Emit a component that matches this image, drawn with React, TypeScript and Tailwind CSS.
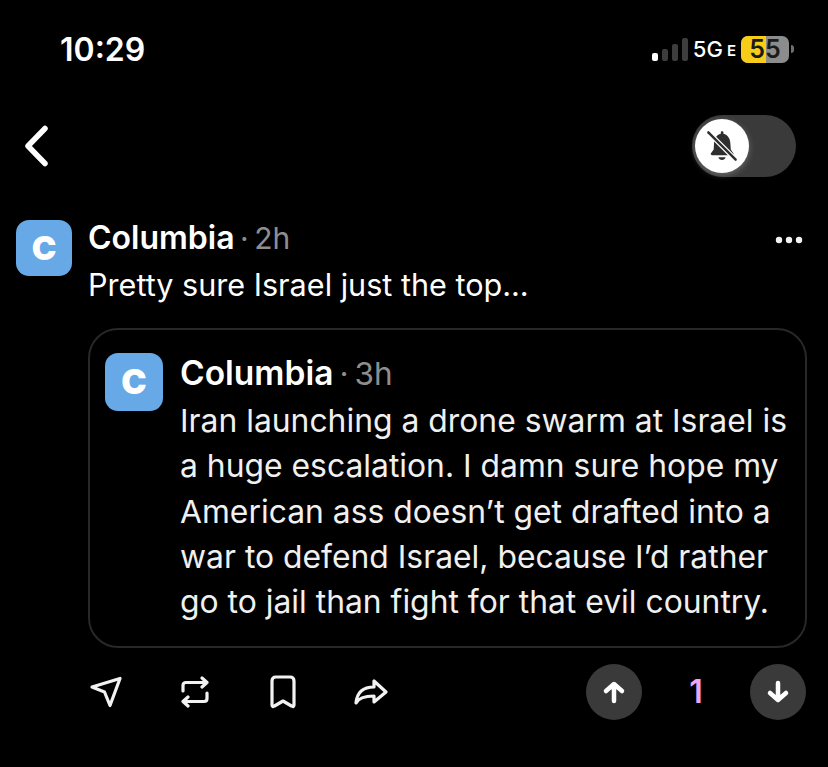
import React from 'react';

const font = { fontFamily: 'Inter, "Noto Sans", sans-serif' };

const Avatar = ({ size }: { size: 'lg' | 'sm' }) => (
  <div
    className={
      size === 'lg'
        ? 'w-14 h-14 shrink-0 rounded-[13px] bg-[#67a9e6] flex items-center justify-center text-white font-black text-[33px] leading-none'
        : 'w-[58px] h-[58px] shrink-0 rounded-[13px] bg-[#67a9e6] flex items-center justify-center text-white font-black text-[34px] leading-none'
    }
  >
    C
  </div>
);

const BellOff = () => (
  <svg width="38" height="38" viewBox="0 0 32 32" fill="#2e2e2e">
    <path d="M15 4.500c0-1.200 2.200-1.200 2.200 0v1.100c3.800 1 5.600 4 5.800 7.800l.4 5.600 2.200 3.200c.5.800 0 1.500-.8 1.500H7.500c-.8 0-1.300-.8-.8-1.500L9 19l.3-5.500c.2-3.900 2-6.900 5.700-7.900z" />
    <path d="M13 25.500h6c-.3 1.500-1.500 2.300-3 2.300s-2.700-.8-3-2.300z" />
    <path d="M4 4l24 24" stroke="#fff" strokeWidth="4" />
    <path d="M4.500 4.500l23 23" stroke="#2e2e2e" strokeWidth="2" strokeLinecap="round" />
  </svg>
);

const iconProps = {
  fill: 'none',
  stroke: '#f2f2f2',
  strokeWidth: 3.200,
  strokeLinecap: 'round' as const,
  strokeLinejoin: 'round' as const,
};

export default function App() {
  return (
    <div className="w-[828px] h-[767px] bg-black text-white overflow-hidden flex flex-col" style={font}>
      {/* status bar */}
      <div className="h-[115px] flex justify-between pl-[60px] pr-[34px] pt-[30px] shrink-0">
        <div className="text-[32px] font-semibold leading-[40px]">10:29</div>
        <div className="flex items-start pt-[6px]">
          <div className="flex items-end gap-[4px] h-[25px] mr-[5px]">
            <span className="w-[6px] h-[8px] rounded-[2px] bg-white" />
            <span className="w-[6px] h-[12px] rounded-[2px] bg-[#3d3d3d]" />
            <span className="w-[6px] h-[17px] rounded-[2px] bg-[#3d3d3d]" />
            <span className="w-[6px] h-[23px] rounded-[2px] bg-[#3d3d3d]" />
          </div>
          <span className="text-[22px] font-medium leading-[26px]">5G</span>
          <span className="text-[15px] font-semibold leading-[26px] pt-[2px] ml-[4px] mr-[5px]">E</span>
          <div className="relative w-[48px] h-[27px] rounded-[7px] bg-[#8c8c8c] flex items-center justify-center">
            <div className="absolute inset-y-0 left-0 w-[25px] rounded-l-[7px] bg-[#f7cd19]" />
            <span className="relative text-[25px] font-semibold leading-none text-[#1a1a1a]">55</span>
          </div>
          <span className="w-[3px] h-[8px] mt-[9px] ml-[2px] rounded-r-sm bg-[#6f6f6f]" />
        </div>
      </div>

      {/* nav */}
      <div className="h-[62px] flex items-center justify-between pl-[22px] pr-[32px] shrink-0">
        <svg width="30" height="42" viewBox="0 0 30 42" fill="none" stroke="#fff" strokeWidth="5.500" strokeLinecap="round" strokeLinejoin="round">
          <path d="M23 3.500 6 21l17 17.500" />
        </svg>
        <div className="w-[104px] h-[62px] rounded-full bg-[#3a3a3a] flex items-center pl-[3px]">
          <div className="w-[54px] h-[54px] rounded-full bg-white flex items-center justify-center shadow-[0_2px_6px_rgba(255,255,255,0.25)]">
            <BellOff />
          </div>
        </div>
      </div>

      {/* post */}
      <div className="flex gap-4 pl-4 pr-[22px] pt-[43px]">
        <Avatar size="lg" />
        <div className="flex-1 min-w-0">
          <div className="flex items-start justify-between h-[36px]">
            <div className="text-[32px] leading-[36px]">
              <span className="font-semibold">Columbia</span>
              <span className="text-[#8e8e8e] text-[30px] mx-[5.5px]">·</span>
              <span className="text-[#8e8e8e] text-[30px]">2h</span>
            </div>
            <svg width="28" height="8" viewBox="0 0 28 8" fill="#f2f2f2" className="mt-[16px] mr-[3px]">
              <circle cx="4" cy="4" r="3.200" />
              <circle cx="14" cy="4" r="3.200" />
              <circle cx="24" cy="4" r="3.200" />
            </svg>
          </div>
          <p className="text-[30.6px] leading-[45px] mt-[6px]">Pretty sure Israel just the top...</p>

          {/* quoted post */}
          <div className="mt-[21px] w-[719px] h-[320px] rounded-[30px] border-2 border-[#282828] flex gap-[17px] pl-[15px] pr-[10px] pt-[23px]">
            <Avatar size="sm" />
            <div className="min-w-0">
              <div className="text-[33.5px] leading-[36px] mt-[2px]">
                <span className="font-semibold">Columbia</span>
                <span className="text-[#8e8e8e] text-[31.5px] mx-[6px]">·</span>
                <span className="text-[#8e8e8e] text-[31.5px]">3h</span>
              </div>
              <p className="text-[31.85px] leading-[45.25px] text-[#f0f0f0] mt-[6px] whitespace-nowrap">
                Iran launching a drone swarm at Israel is<br />
                a huge escalation. I damn sure hope my<br />
                American ass doesn’t get drafted into a<br />
                war to defend Israel, because I’d rather<br />
                go to jail than fight for that evil country.
              </p>
            </div>
          </div>

          {/* actions */}
          <div className="flex items-center justify-between w-[718px] mt-[16px]">
            <div className="flex items-center gap-[58px]">
              <svg width="34" height="34" viewBox="0 0 34 34" {...iconProps}>
                <path d="M4 12 32 3.500 22 30.500 16.500 17z" />
              </svg>
              <svg width="30" height="32" viewBox="0 0 30 32" {...iconProps}>
                <path d="M3 15V9.500c0-2 1-3 3-3h21M22 2l5 4.500L22 11M27 17v5.500c0 2-1 3-3 3H3M8 21l-5 4.500L8 30" />
              </svg>
              <svg width="28" height="34" viewBox="0 0 28 34" {...iconProps} className="ml-[1px]">
                <path d="M3 6c0-2.500 1.500-4 4-4h14c2.500 0 4 1.500 4 4v24c0 1.500-1 2-2.500 1L14 26l-8.500 5C4 32 3 31.500 3 30z" />
              </svg>
              <svg width="34" height="28" viewBox="0 0 34 28" {...iconProps} className="ml-[-1px]">
                <path d="M32 14 20 3v6C10 9 3 14 2 25c3-6 10-7 18-7v6z" />
              </svg>
            </div>
            <div className="flex items-center">
              <div className="w-14 h-14 rounded-full bg-[#3a3a3a] flex items-center justify-center">
                <svg width="26" height="30" viewBox="0 0 26 30" fill="none" stroke="#fff" strokeWidth="4.500" strokeLinecap="round" strokeLinejoin="round">
                  <path d="M13 24V7M5 14l8-7 8 7" />
                </svg>
              </div>
              <span className="w-[108px] text-center text-[32px] font-semibold text-[#f0a4f5] leading-none">1</span>
              <div className="w-14 h-14 rounded-full bg-[#3a3a3a] flex items-center justify-center">
                <svg width="26" height="30" viewBox="0 0 26 30" fill="none" stroke="#fff" strokeWidth="4.500" strokeLinecap="round" strokeLinejoin="round">
                  <path d="M13 6v17M5 16l8 7 8-7" />
                </svg>
              </div>
            </div>
          </div>
        </div>
      </div>
    </div>
  );
}
